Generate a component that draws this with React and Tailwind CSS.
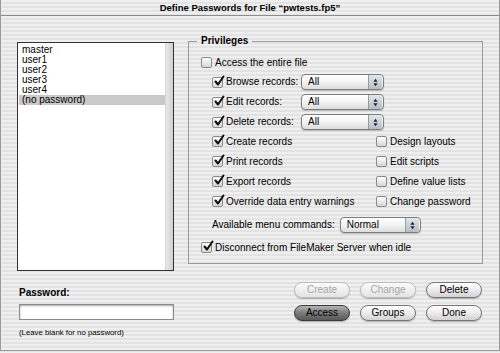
const stripes = 'bg-[repeating-linear-gradient(180deg,#efefef_0px,#efefef_2px,#e3e3e3_2px,#e3e3e3_4px)]';

function Check({ on }) {
    return (
        <span className="relative inline-flex w-[11px] h-[11px] shrink-0 rounded-[2px] border border-[#8a8a8a] bg-gradient-to-b from-[#ffffff] to-[#d6d6d6]">
            {on && (
                <svg viewBox="0 0 12 12" className="absolute left-[0px] top-[-3px] w-[12px] h-[12px]">
                    <path d="M2.5 6.5 L5 9.5 L10.5 1.5" fill="none" stroke="#111" strokeWidth="2.1" strokeLinecap="round" strokeLinejoin="round" />
                </svg>
            )}
        </span>
    );
}

function CheckRow({ on, label, className = '' }) {
    return (
        <div className={`flex items-center gap-[3px] ${className}`}>
            <Check on={on} />
            <span>{label}</span>
        </div>
    );
}

function Popup({ value, width }) {
    return (
        <div className={`flex items-center h-[16px] rounded-[4px] border border-[#7d7d7d] bg-gradient-to-b from-[#ffffff] via-[#f4f4f4] to-[#dcdcdc] shadow-[0_1px_1px_rgba(0,0,0,0.2)] ${width}`}>
            <span className="flex-1 pl-[6px]">{value}</span>
            <span className="flex flex-col items-center justify-center w-[14px] h-full border-l border-[#9a9a9a] rounded-r-[3px] bg-gradient-to-b from-[#dfe6ee] to-[#b5bdc6] mr-[1px]">
                <svg viewBox="0 0 6 10" className="w-[5px] h-[9px]">
                    <path d="M3 0.5 L5.5 4 H0.5 Z M3 9.5 L5.5 6 H0.5 Z" fill="#222" />
                </svg>
            </span>
        </div>
    );
}

function Button({ label, disabled, primary }) {
    let tone = 'border-[#777] bg-gradient-to-b from-[#ffffff] via-[#ececec] to-[#d2d2d2] text-black';
    if (disabled) tone = 'border-[#bdbdbd] bg-gradient-to-b from-[#fbfbfb] to-[#e4e4e4] text-[#a6a6a6]';
    if (primary) tone = 'border-[#3a3a3a] bg-gradient-to-b from-[#b5b5b5] via-[#7a7a7a] to-[#5a5a5a] text-black';
    return (
        <div className={`flex items-center justify-center w-[56px] h-[16px] rounded-full border shadow-[0_1px_1px_rgba(0,0,0,0.25)] ${tone}`}>
            {label}
        </div>
    );
}

export default function App() {
    const users = ['master', 'user1', 'user2', 'user3', 'user4'];
    return (
        <div className={`w-[500px] h-[353px] overflow-hidden text-[10px] leading-[10px] text-black font-['Liberation_Sans',sans-serif] ${stripes}`}>
            <div className="flex flex-col w-[500px] h-[351px] border-x border-b border-[#9a9a9a]">
                <div className="flex items-center justify-center h-[16px] border-b border-[#8c8c8c] font-bold text-[9.5px]">
                    Define Passwords for File “pwtests.fp5”
                </div>

                <div className="flex gap-[14px] pl-[16px] pt-[26px]">
                    <div className="flex flex-col w-[157px]">
                        <div className="flex h-[229px] border border-[#333] bg-white">
                            <div className="flex-1 flex flex-col pt-[2px] pl-[1px]">
                                {users.map(u => (
                                    <div key={u} className="h-[10px] pl-[3px]">{u}</div>
                                ))}
                                <div className="h-[10px] pl-[3px] bg-[#c9c9c9]">(no password)</div>
                            </div>
                            <div className="w-[8px] bg-gradient-to-r from-[#e8e8e8] to-[#d0d0d0] border-l border-[#d8d8d8]" />
                        </div>
                        <div className="font-bold pl-[2px] mt-[17px]">Password:</div>
                        <div className="mt-[6px] ml-[2px] h-[16px] w-[155px] border border-[#8a8a8a] bg-white shadow-[inset_0_1px_2px_rgba(0,0,0,0.35)]" />
                        <div className="mt-[8px] pl-[2px] text-[7.8px]">(Leave blank for no password)</div>
                    </div>

                    <div className="flex flex-col w-[295px]">
                        <div className="relative h-[223px] border border-[#9a9a9a] mt-[-1px]">
                            <div className={`absolute left-[8px] top-[-6px] px-[4px] font-bold ${stripes}`}>Privileges</div>
                            <div className="flex flex-col pl-[12px] pt-[15px]">
                                <CheckRow on={false} label="Access the entire file" />
                                <div className="flex flex-col gap-[4px] pl-[11px] mt-[6px]">
                                    <div className="flex items-center">
                                        <CheckRow on label="Browse records:" className="w-[89px]" />
                                        <Popup value="All" width="w-[83px]" />
                                    </div>
                                    <div className="flex items-center">
                                        <CheckRow on label="Edit records:" className="w-[89px]" />
                                        <Popup value="All" width="w-[83px]" />
                                    </div>
                                    <div className="flex items-center">
                                        <CheckRow on label="Delete records:" className="w-[89px]" />
                                        <Popup value="All" width="w-[83px]" />
                                    </div>
                                </div>
                                <div className="grid grid-cols-[164px_1fr] gap-y-[9px] pl-[11px] mt-[6px]">
                                    <CheckRow on label="Create records" />
                                    <CheckRow on={false} label="Design layouts" />
                                    <CheckRow on label="Print records" />
                                    <CheckRow on={false} label="Edit scripts" />
                                    <CheckRow on label="Export records" />
                                    <CheckRow on={false} label="Define value lists" />
                                    <CheckRow on label="Override data entry warnings" />
                                    <CheckRow on={false} label="Change password" />
                                </div>
                                <div className="flex items-center gap-[5px] pl-[11px] mt-[10px]">
                                    <span>Available menu commands:</span>
                                    <Popup value="Normal" width="w-[81px]" />
                                </div>
                                <CheckRow on label="Disconnect from FileMaker Server when idle" className="mt-[9px]" />
                            </div>
                        </div>
                        <div className="flex flex-col items-end gap-[7px] mt-[18px] pr-[1px]">
                            <div className="flex gap-[10px]">
                                <Button label="Create" disabled />
                                <Button label="Change" disabled />
                                <Button label="Delete" />
                            </div>
                            <div className="flex gap-[10px]">
                                <Button label="Access" primary />
                                <Button label="Groups" />
                                <Button label="Done" />
                            </div>
                        </div>
                    </div>
                </div>
            </div>
        </div>
    );
}
